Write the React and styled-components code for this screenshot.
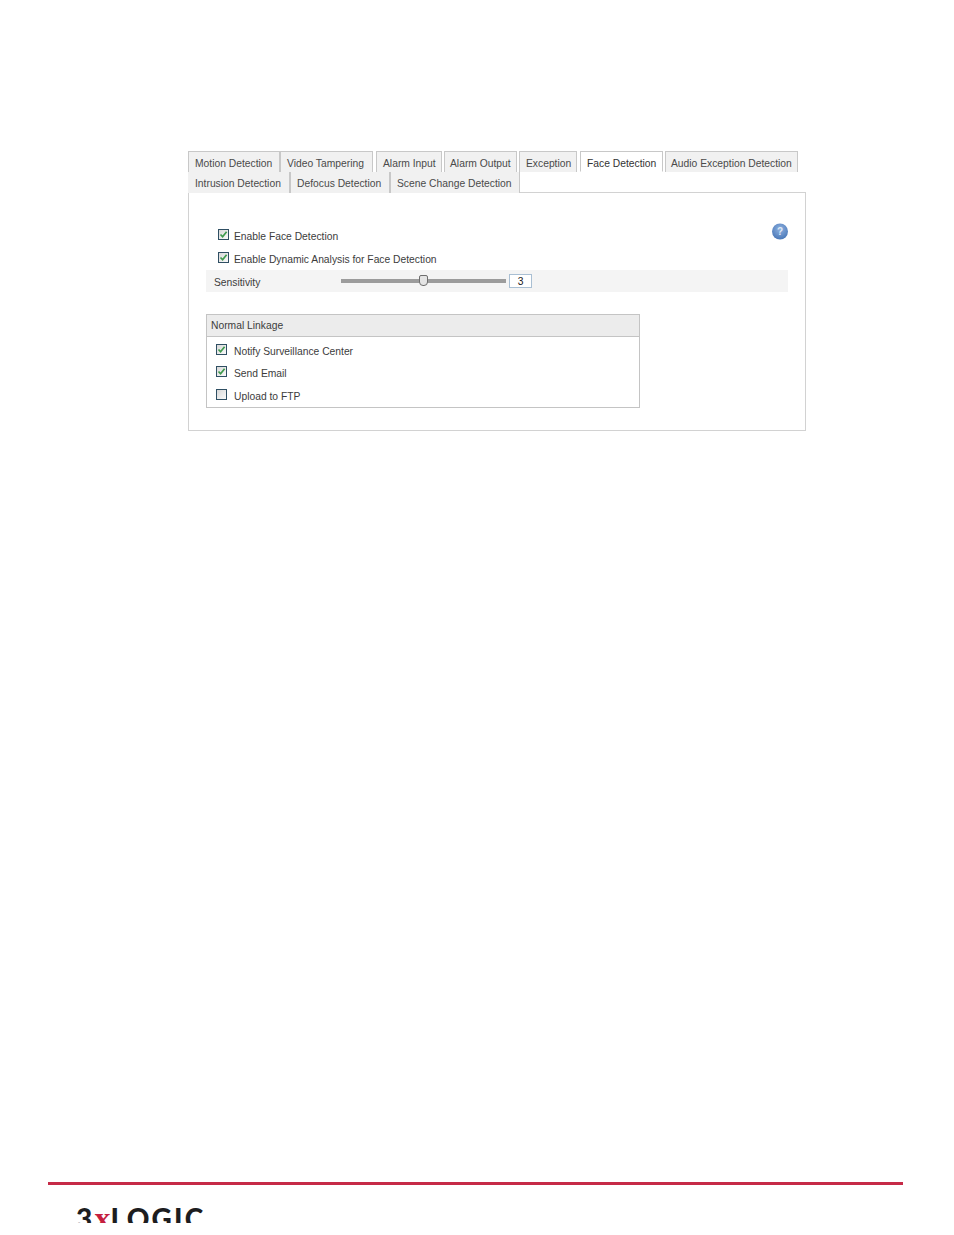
import React from 'react'
import styled, { createGlobalStyle } from 'styled-components'

const Global = createGlobalStyle`
  html, body { margin: 0; padding: 0; background: #fff; }
  body { font-family: "Liberation Sans", Arial, sans-serif; font-size: 10.3px; color: #3c3c3c; }
`

const Page = styled.div`
  width: 954px;
  height: 1235px;
  display: flex;
  flex-direction: column;
  overflow: hidden;
`

const Content = styled.main`
  flex: 1;
  width: 618px;
  margin-left: 188px;
  padding-top: 151px;
`

const TabRow = styled.div`
  display: flex;
  height: ${({ $h }) => $h}px;
  box-sizing: border-box;
`

const Tab = styled.div`
  box-sizing: border-box;
  width: ${({ $w }) => $w}px;
  margin-right: ${({ $gap }) => $gap || 0}px;
  height: 100%;
  padding-left: ${({ $pad }) => $pad}px;
  line-height: 23px;
  white-space: nowrap;
  background: ${({ $on }) => ($on ? '#fff' : '#f1f1f1')};
  border: 1px solid #c8c8c8;
  border-bottom: ${({ $on }) => ($on ? '1px solid #fff' : 'none')};
  color: ${({ $on }) => ($on ? '#333' : '#4a4a4a')};
`

const SubTab = styled(Tab)`
  line-height: 23px;
  border-top: none;
  border-bottom: none;
  border-left: ${({ $first }) => ($first ? 'none' : '1px solid #c8c8c8')};
  background: #f1f1f1;
  position: relative;
  z-index: 1;
  margin-bottom: -1px;
  height: 21px;
`

const Panel = styled.section`
  box-sizing: border-box;
  height: 239px;
  border: 1px solid #d2d2d2;
  padding: 31px 17px 0 17px;
  position: relative;
`

const CheckRow = styled.label`
  display: flex;
  align-items: center;
  height: ${({ $h }) => $h || 24}px;
  padding-left: ${({ $pad }) => $pad || 12}px;
  color: #3c3c3c;
`

const Box = styled.span`
  box-sizing: border-box;
  width: 11px;
  height: 11px;
  border: 1px solid #2f4f63;
  margin-right: ${({ $gap }) => $gap}px;
  margin-bottom: 4px;
  background: linear-gradient(135deg, #d8d8d8, #fafafa);
  display: flex;
  align-items: center;
  justify-content: center;
  flex: none;
`

const HelpIcon = styled.svg`
  position: absolute;
  left: 582px;
  top: 30px;
`

const SliderRow = styled.div`
  display: flex;
  align-items: center;
  height: 22px;
  background: #f4f4f4;
  width: 582px;
  padding-left: 8px;
  box-sizing: border-box;
`

const RowLabel = styled.span`
  width: 127px;
  padding-top: 2px;
`

const Track = styled.div`
  width: 165px;
  height: 4px;
  background: #9c9c9c;
  position: relative;
`

const Thumb = styled.div`
  position: absolute;
  left: 78px;
  top: -4px;
  width: 9px;
  height: 11px;
  box-sizing: border-box;
  background: #e4e4e4;
  border: 1px solid #6e6e6e;
  border-radius: 2px 2px 4px 4px;
`

const ValueBox = styled.div`
  box-sizing: border-box;
  margin-left: 3px;
  width: 23px;
  height: 14px;
  border: 1px solid #a9bfd3;
  background: #fff;
  text-align: center;
  line-height: 13px;
  color: #222;
`

const Linkage = styled.div`
  box-sizing: border-box;
  margin-top: 22px;
  width: 434px;
  height: 94px;
  border: 1px solid #c4c4c4;
`

const LinkageHead = styled.div`
  height: 21px;
  background: #ececec;
  border-bottom: 1px solid #c4c4c4;
  padding-left: 4px;
  line-height: 21px;
`

const LinkageBody = styled.div`
  padding-top: 3px;
`

const Footer = styled.footer`
  height: 53px;
  flex: none;
  margin: 0 51px 0 48px;
  border-top: 3px solid #c62a47;
  box-sizing: border-box;
`

const LogoClip = styled.div`
  padding-left: 28px;
`

const Logo = styled.div`
  margin-top: 19px;
  font-family: "Lato", "Liberation Sans", sans-serif;
  font-weight: 900;
  font-size: 28px;
  letter-spacing: 2.2px;
  line-height: 28px;
  height: 19px;
  overflow: hidden;
  color: #1d1d1f;
  & b { color: #c5203e; font-family: "Liberation Serif", serif; font-size: 32px; line-height: 0; font-weight: 700; letter-spacing: 0; }
`

const Tick = () => (
  <svg width="9" height="9" viewBox="0 0 9 9">
    <path d="M1.5 4.5 L3.6 6.8 L7.6 1.8" fill="none" stroke="#3f9a4d" strokeWidth="1.7" />
  </svg>
)

const Check = ({ on, gap, label, h, pad }) => (
  <CheckRow $h={h} $pad={pad}>
    <Box $gap={gap}>{on && <Tick />}</Box>
    {label}
  </CheckRow>
)

const row1 = [
  { t: 'Motion Detection', w: 92, pad: 6 },
  { t: 'Video Tampering', w: 93, pad: 6, gap: 3 },
  { t: 'Alarm Input', w: 66, pad: 6, gap: 2 },
  { t: 'Alarm Output', w: 73, pad: 5, gap: 2 },
  { t: 'Exception', w: 58, pad: 6, gap: 3 },
  { t: 'Face Detection', w: 83, pad: 6, gap: 2, on: true },
  { t: 'Audio Exception Detection', w: 133, pad: 5 },
]

const row2 = [
  { t: 'Intrusion Detection', w: 102, pad: 7, first: true },
  { t: 'Defocus Detection', w: 100, pad: 6 },
  { t: 'Scene Change Detection', w: 130, pad: 6 },
]

export default function App() {
  return (
    <Page>
      <Global />
      <Content>
        <TabRow $h={21}>
          {row1.map((tab) => (
            <Tab key={tab.t} $w={tab.w} $pad={tab.pad} $gap={tab.gap} $on={tab.on}>{tab.t}</Tab>
          ))}
        </TabRow>
        <TabRow $h={20}>
          {row2.map((tab) => (
            <SubTab key={tab.t} $w={tab.w} $pad={tab.pad} $first={tab.first}>{tab.t}</SubTab>
          ))}
        </TabRow>
        <Panel>
          <HelpIcon width="18" height="18" viewBox="0 0 18 18">
            <defs>
              <radialGradient id="help" cx="50%" cy="35%" r="65%">
                <stop offset="0%" stopColor="#8fb2e0" />
                <stop offset="100%" stopColor="#4a78b8" />
              </radialGradient>
            </defs>
            <circle cx="9" cy="8.5" r="8" fill="url(#help)" />
            <text x="9" y="12" textAnchor="middle" fontSize="10" fontWeight="700" fill="#dfe9f6" fontFamily="Liberation Sans">?</text>
          </HelpIcon>
          <Check on gap={5} label="Enable Face Detection" />
          <Check on gap={5} h={22} label="Enable Dynamic Analysis for Face Detection" />
          <SliderRow>
            <RowLabel>Sensitivity</RowLabel>
            <Track><Thumb /></Track>
            <ValueBox>3</ValueBox>
          </SliderRow>
          <Linkage>
            <LinkageHead>Normal Linkage</LinkageHead>
            <LinkageBody>
              <Check on gap={7} pad={9} h={22} label="Notify Surveillance Center" />
              <Check on gap={7} pad={9} h={22} label="Send Email" />
              <Check gap={7} pad={9} h={24} label="Upload to FTP" />
            </LinkageBody>
          </Linkage>
        </Panel>
      </Content>
      <Footer>
        <LogoClip>
          <Logo>3<b>x</b>LOGIC</Logo>
        </LogoClip>
      </Footer>
    </Page>
  )
}
